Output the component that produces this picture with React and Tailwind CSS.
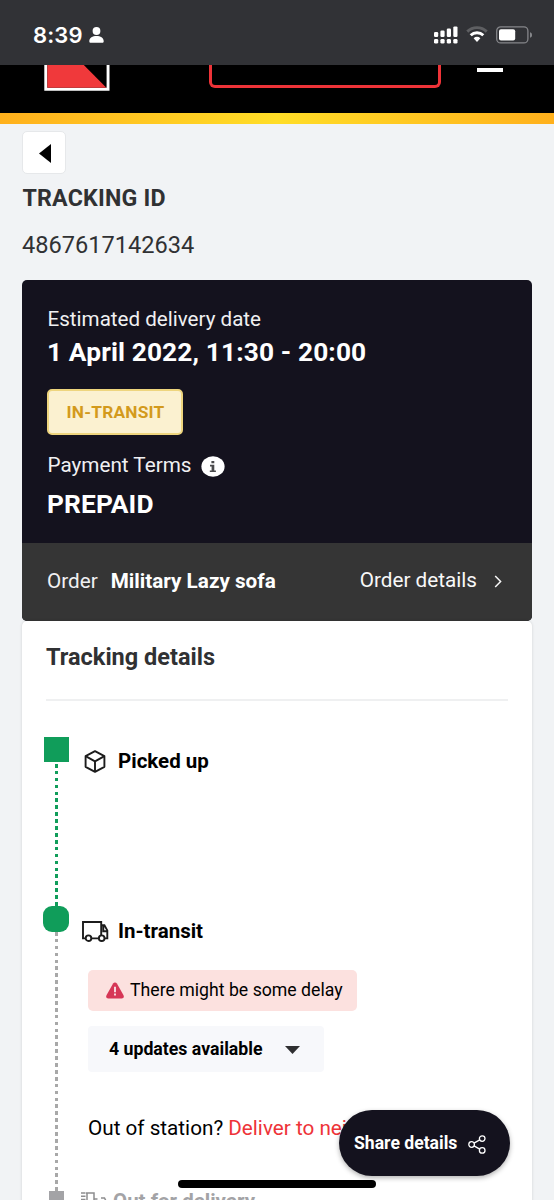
/**
 * Shipment tracking page (mobile)
 */

const STEP_ICON = 'shrink-0 text-[#1c1c1c]';

function StatusBar() {
  return (
    <div className="h-[65px] shrink-0 bg-[#313236] flex items-center justify-between pl-[33px] pr-[22px] pt-1 text-white">
      <div className="flex items-center gap-[6px]">
        <span className="font-['Inter',sans-serif] font-semibold text-[22px] leading-7 tracking-[0.1px]">8:39</span>
        <svg width="15" height="16" viewBox="0 0 15 16" fill="currentColor">
          <circle cx="7.5" cy="4" r="3.9" />
          <path d="M0.3 14.2C0.3 10.9 3.6 9 7.5 9s7.2 1.9 7.2 5.2c0 1-.6 1.5-1.5 1.5H1.8c-.9 0-1.5-.5-1.5-1.5z" />
        </svg>
      </div>
      <div className="flex items-center gap-[8px]">
        <svg width="24" height="18" viewBox="0 0 24 18" fill="currentColor">
          <rect x="0" y="6" width="4.2" height="5" rx="1.2" />
          <rect x="6.4" y="4.6" width="4.2" height="6.4" rx="1.2" />
          <rect x="12.8" y="2.6" width="4.2" height="8.4" rx="1.2" />
          <rect x="19.3" y="0.4" width="4.2" height="10.6" rx="1.2" />
          <rect x="0" y="12.9" width="4.2" height="4.7" rx="1.4" />
          <rect x="6.4" y="12.9" width="4.2" height="4.7" rx="1.4" />
          <rect x="12.8" y="12.9" width="4.2" height="4.7" rx="1.4" />
          <rect x="19.3" y="12.9" width="4.2" height="4.7" rx="1.4" />
        </svg>
        <svg width="22" height="17" viewBox="0 0 22 17" fill="none" stroke="currentColor" strokeWidth="2.9">
          <path d="M1.3 5.6a13.8 13.8 0 0 1 19.4 0" opacity="0.22" />
          <path d="M4.7 9.3a9 9 0 0 1 12.6 0" />
          <path d="M7.6 12.2a4.9 4.9 0 0 1 6.8 0L11 15.9z" fill="currentColor" stroke="none" />
        </svg>
        <svg width="36" height="18" viewBox="0 0 36 18" fill="none">
          <rect x="0.7" y="0.9" width="31.2" height="16" rx="4" stroke="#85868a" strokeWidth="1.3" />
          <rect x="3" y="3.3" width="16.2" height="11.2" rx="2" fill="#fff" />
          <path d="M34 6.2c1.6.5 2 1.5 2 2.8s-.4 2.3-2 2.8z" fill="#85868a" />
        </svg>
      </div>
    </div>
  );
}

function SiteHeader() {
  return (
    <>
      <div className="h-12 shrink-0 bg-black flex items-start pl-11">
        <svg width="66" height="26" viewBox="0 0 66 26">
          <path d="M0.3 0h65.2v25.7H0.3z" fill="#fff" />
          <path d="M3.3 0h59.3v22.8H3.3z" fill="#000" />
          <path d="M3.3 0h36.5l22.6 22.8H3.3z" fill="#f0393b" />
        </svg>
        <div className="ml-[99px] w-[232px] h-[23px] border-[3px] border-t-0 border-[#ee3338] rounded-b-md" />
        <div className="ml-[36px] mt-[3px] w-[26px] h-[4px] bg-white" />
      </div>
      <div className="h-[11px] shrink-0 bg-[linear-gradient(to_right,#ffb01c,#ffdd27_50%,#ffb01c)]" />
    </>
  );
}

function SummaryCard() {
  return (
    <div className="rounded-[5px] overflow-hidden shrink-0 bg-[#14121e] text-white">
      <div className="h-[263px] px-[25px] pt-[25px] flex flex-col items-start">
        <p className="pl-[0.5px] text-[20.6px] leading-[28px] text-[#f0f0f2]">Estimated delivery date</p>
        <p className="mt-[3px] text-[26.3px] leading-[32px] font-bold tracking-[0.12px]">1 April 2022, 11:30 - 20:00</p>
        <span className="mt-[21px] w-[136px] h-[46px] pt-[2px] pl-px rounded-[5px] border-2 border-[#eed57e] bg-[#fbf1d0] text-[#d39a1c] flex items-center justify-center text-[17.3px] font-bold tracking-[0.2px]">
          IN-TRANSIT
        </span>
        <div className="mt-[16px] flex items-center h-[28px]">
          <p className="pl-[0.5px] text-[20.7px] leading-[28px] text-[#f0f0f2]">Payment Terms</p>
          <svg className="ml-[9px] mt-[3px]" width="24" height="21" viewBox="0 0 24 21">
            <ellipse cx="12" cy="10.5" rx="11.6" ry="10.2" fill="#fff" />
            <path d="M10.4 5h2.9v2.3h-2.9zM9 8.8h4.3v5.6h1.6v1.7H8.8v-1.7h1.8v-3.9H9z" fill="#4a4a4c" />
          </svg>
        </div>
        <p className="mt-[9px] text-[26.3px] leading-[32px] font-bold tracking-[0.1px]">PREPAID</p>
      </div>
      <div className="h-[78px] pl-[25px] pr-[30px] bg-[#353535] flex items-center text-[20.7px] leading-[28px] pb-[2px]">
        <span className="text-[#f0f0f2]">Order</span>
        <span className="ml-[13px] font-bold">Military Lazy sofa</span>
        <a className="ml-auto mb-[2px] flex items-center text-[#f8f8f8]">
          Order details
          <svg className="ml-[17px] mt-[3px]" width="8" height="13" viewBox="0 0 8 13" fill="none" stroke="currentColor" strokeWidth="1.5">
            <path d="M1.2 1l5.4 5.5L1.2 12" />
          </svg>
        </a>
      </div>
    </div>
  );
}

function BoxIcon() {
  return (
    <svg className={STEP_ICON} width="22" height="23" viewBox="0 0 22 23" fill="none" stroke="currentColor" strokeWidth="1.9" strokeLinejoin="round">
      <path d="M11 1.2l9.4 5v10.6L11 21.8l-9.4-5V6.2z" />
      <path d="M1.6 6.2L11 11.4l9.4-5.2M11 11.4v10.4" />
    </svg>
  );
}

function TruckIcon() {
  return (
    <svg className={STEP_ICON} width="27" height="21" viewBox="0 0 27 21" fill="none" stroke="currentColor" strokeWidth="1.9">
      <path d="M3.6 17.4H1V1h18.2v16.4M9.4 17.4h7.4M19.2 4.2h3.2l2.9 5.2v8h-2.6M21.3 4.4v5.8h4" />
      <circle cx="6.5" cy="17.2" r="2.8" />
      <circle cx="19.7" cy="17.2" r="2.8" fill="#fff" />
    </svg>
  );
}

function DeliveryIcon() {
  return (
    <svg className="shrink-0 text-[#8d8d8f]" width="27" height="21" viewBox="0 0 27 21" fill="none" stroke="currentColor" strokeWidth="1.5">
      <path d="M0 2h4.5M0 5.2h4.5M0 8.4h4.5M5 2h8v15H6V2M13 8h3.5M20 7h3.5l1.5 3V17H13" />
    </svg>
  );
}

function Rail() {
  return (
    <div className="w-[26px] shrink-0 flex flex-col items-center">
      <div className="w-[25px] h-[25px] shrink-0 bg-[#109d5a]" />
      <div className="mt-[2px] ml-px w-[3px] h-[142px] shrink-0 bg-[repeating-linear-gradient(to_bottom,#109d5a_0_3.6px,transparent_3.6px_6.9px)]" />
      <div className="w-[26px] h-[26px] shrink-0 rounded-[9px] bg-[#109d5a]" />
      <div className="ml-px w-[3px] h-[259px] shrink-0 bg-[repeating-linear-gradient(to_bottom,#a8a8a8_0_3.6px,transparent_3.6px_6.9px)]" />
      <div className="w-[15px] h-[15px] shrink-0 bg-[#a3a3a6]" />
    </div>
  );
}

function Timeline() {
  return (
    <div className="flex pl-[21px] pt-[36px]">
      <Rail />
      <div className="flex-1 min-w-0 pt-[10px]">
        <div className="h-[28px] flex items-center pl-[15px] text-[20.5px] leading-[28px] font-bold text-black">
          <BoxIcon />
          <span className="ml-[12px]">Picked up</span>
        </div>

        <div className="mt-[142px] h-[28px] flex items-center pl-[13px] text-[20.5px] leading-[28px] font-bold text-black">
          <TruckIcon />
          <span className="ml-[9px]">In-transit</span>
        </div>

        <div className="pl-[19px] flex flex-col items-start text-black">
          <div className="mt-[25px] w-[269px] h-[41px] rounded-[5px] bg-[#fce1df] flex items-center pl-[18px] text-[17.7px]">
            <svg width="18" height="17" viewBox="0 0 18 17">
              <path d="M9 0.4c.8 0 1.4.4 1.9 1.1l6.6 11.7c.9 1.7 0 3.3-1.8 3.3H2.3c-1.8 0-2.7-1.6-1.8-3.3L7.1 1.5C7.6.8 8.2.4 9 .4z" fill="#d63656" />
              <path d="M8.2 4.8h1.6v5.4H8.2zM8.2 11.6h1.6v1.8H8.2z" fill="#fff" />
            </svg>
            <span className="ml-[6px] whitespace-nowrap">There might be some delay</span>
          </div>
          <button className="mt-[15px] w-[236px] h-[46px] pt-px rounded-[4px] bg-[#f7f8fb] flex items-center pl-[21px] text-[17.7px] font-bold">
            4 updates available
            <svg className="ml-[23px]" width="15" height="8" viewBox="0 0 15 8" fill="#2f2f31">
              <path d="M0 0h15L7.5 8z" />
            </svg>
          </button>
          <p className="mt-[42px] text-[20.7px] leading-[28px] whitespace-nowrap">
            Out of station? <a className="text-[#ee3338]">Deliver to neighbour</a>
          </p>
        </div>

        <div className="mt-[45px] h-[28px] flex items-center pl-[12px] text-[20.5px] leading-[28px] font-bold text-[#a3a3a6]">
          <DeliveryIcon />
          <span className="ml-[5px]">Out for delivery</span>
        </div>
      </div>
    </div>
  );
}

export default function App() {
  return (
    <div className="relative w-full h-[1200px] overflow-hidden flex flex-col bg-[#f1f3f5] font-['Roboto',sans-serif] text-[#303133]">
      <StatusBar />
      <SiteHeader />

      <div className="px-[22px] pt-[7px] flex flex-col">
        <button className="w-[44px] h-[43px] pt-[2px] pl-px rounded-[5px] bg-white border border-[#e6e8ea] flex items-center justify-center">
          <svg width="12" height="19" viewBox="0 0 12 19">
            <path d="M12 0v19L0 9.5z" fill="#000" />
          </svg>
        </button>
        <h1 className="mt-[10px] pl-[0.5px] text-[23.2px] leading-[28px] font-bold tracking-[0.2px]">TRACKING ID</h1>
        <p className="mt-[19px] text-[23.6px] leading-[28px]">4867617142634</p>
        <div className="h-[21px]" />
        <SummaryCard />

        {/* Tracking details */}
        <div className="h-[620px] shrink-0 bg-white rounded-t-[5px] shadow-[0_0_3px_rgba(0,0,0,0.14)] overflow-hidden">
          <h2 className="pt-[21px] mx-[24px] pb-[27px] text-[23.5px] leading-[30px] font-bold border-b-2 border-[#eff0f1]">
            Tracking details
          </h2>
          <Timeline />
        </div>
      </div>

      {/* Floating share button */}
      <button className="absolute left-[339px] top-[1110px] w-[171px] h-[66px] rounded-full bg-[#14121e] text-white flex items-center pl-[15px] text-[17.6px] font-bold shadow-[0_2px_5px_rgba(0,0,0,0.3)]">
        Share details
        <svg className="ml-[11px] mt-[3px]" width="18" height="19" viewBox="0 0 18 19" fill="none" stroke="currentColor" strokeWidth="1.3">
          <circle cx="3.6" cy="9.5" r="2.8" />
          <circle cx="14.2" cy="3.6" r="2.8" />
          <circle cx="14.2" cy="15.4" r="2.8" />
          <path d="M6 8.1l5.7-3.2M6 10.9l5.7 3.2" />
        </svg>
      </button>
      <div className="absolute left-[178px] top-[1180px] w-[198px] h-[8px] rounded-full bg-black" />
    </div>
  );
}
